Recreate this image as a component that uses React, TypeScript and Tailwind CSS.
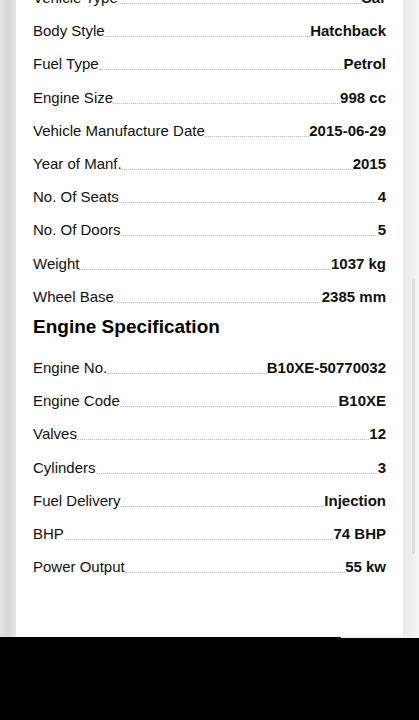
import React from 'react';

type Row = { label: string; value: string };

const vehicleRows: Row[] = [
    { label: 'Vehicle Type', value: 'Car' },
    { label: 'Body Style', value: 'Hatchback' },
    { label: 'Fuel Type', value: 'Petrol' },
    { label: 'Engine Size', value: '998 cc' },
    { label: 'Vehicle Manufacture Date', value: '2015-06-29' },
    { label: 'Year of Manf.', value: '2015' },
    { label: 'No. Of Seats', value: '4' },
    { label: 'No. Of Doors', value: '5' },
    { label: 'Weight', value: '1037 kg' },
    { label: 'Wheel Base', value: '2385 mm' },
];

const engineRows: Row[] = [
    { label: 'Engine No.', value: 'B10XE-50770032' },
    { label: 'Engine Code', value: 'B10XE' },
    { label: 'Valves', value: '12' },
    { label: 'Cylinders', value: '3' },
    { label: 'Fuel Delivery', value: 'Injection' },
    { label: 'BHP', value: '74 BHP' },
    { label: 'Power Output', value: '55 kw' },
];

function SpecRow({ label, value }: Row) {
    return (
        <div className="flex h-[33.2px] items-center">
            <div className="flex w-full items-end text-[15px] leading-[17px] text-[#111]">
                <span className="whitespace-nowrap">{label}</span>
                <span className="mb-[2px] flex-1 border-b border-dotted border-[#bdbdbd]"></span>
                <span className="whitespace-nowrap font-bold">{value}</span>
            </div>
        </div>
    );
}

export default function App() {
    return (
        <div className="relative h-[720px] w-[419px] overflow-hidden font-['Liberation_Sans',Arial,sans-serif]">
            <div className="flex h-[637px]">
                <div className="w-[16px] bg-gradient-to-r from-[#e4e4e4] via-[#d6d6d6] to-[#e9e9e9]"></div>
                <div className="w-[387px] bg-white px-[17px]">
                    <div className="mt-[-19px]">
                        {vehicleRows.map((r) => (
                            <SpecRow key={r.label} {...r} />
                        ))}
                        <div className="h-[38px] pt-[2px] text-[19px] font-bold leading-[23px] text-black">
                            Engine Specification
                        </div>
                        {engineRows.map((r) => (
                            <SpecRow key={r.label} {...r} />
                        ))}
                    </div>
                </div>
                <div className="w-[16px] bg-gradient-to-r from-[#e9e9e9] to-[#f4f4f4]"></div>
            </div>
            <div className="h-[83px] bg-black"></div>
            <div className="absolute left-[341px] top-[636px] h-[2px] w-[78px] bg-[#f2f2f2]"></div>
            <div className="absolute left-[412px] top-[279px] h-[275px] w-[3px] rounded-full bg-[#dcdcdc]"></div>
        </div>
    );
}
